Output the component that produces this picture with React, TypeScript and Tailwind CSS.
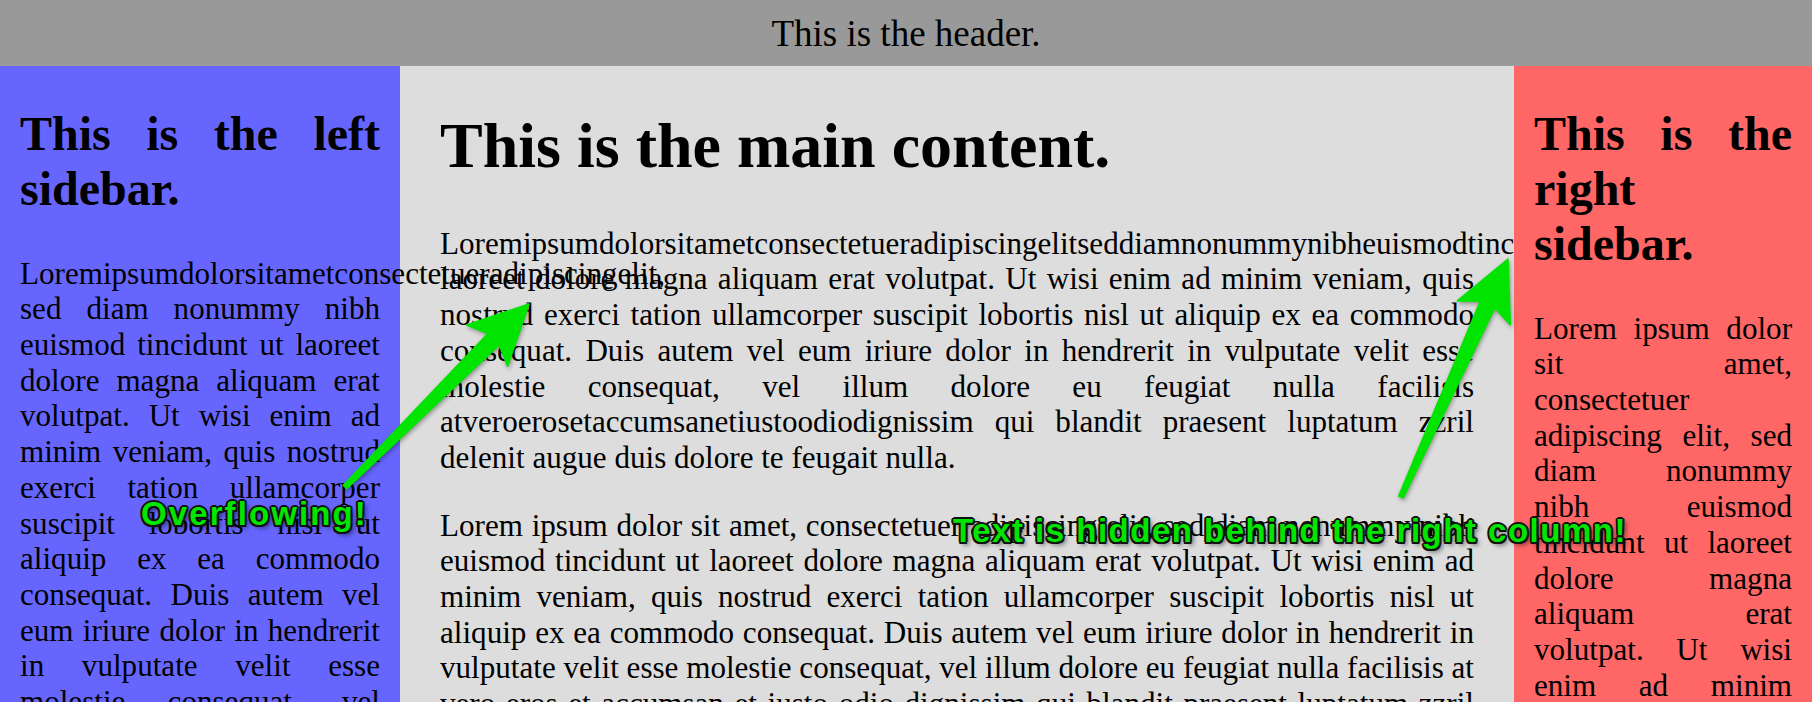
const leftText =
  "Loremipsumdolorsitametconsectetueradipiscingelit, sed diam nonummy nibh euismod tincidunt ut laoreet dolore magna aliquam erat volutpat. Ut wisi enim ad minim veniam, quis nostrud exerci tation ullamcorper suscipit lobortis nisl ut aliquip ex ea commodo consequat. Duis autem vel eum iriure dolor in hendrerit in vulputate velit esse molestie consequat, vel illum dolore eu feugiat nulla facilisis at vero eros et accumsan et iusto odio dignissim qui blandit praesent luptatum zzril delenit augue duis dolore te feugait nulla.";

const mainFirst =
  "Loremipsumdolorsitametconsectetueradipiscingelitseddiamnonummynibheuismodtinciduntut laoreet dolore magna aliquam erat volutpat. Ut wisi enim ad minim veniam, quis nostrud exerci tation ullamcorper suscipit lobortis nisl ut aliquip ex ea commodo consequat. Duis autem vel eum iriure dolor in hendrerit in vulputate velit esse molestie consequat, vel illum dolore eu feugiat nulla facilisis atveroerosetaccumsanetiustoodiodignissim qui blandit praesent luptatum zzril delenit augue duis dolore te feugait nulla.";

const lorem =
  "Lorem ipsum dolor sit amet, consectetuer adipiscing elit, sed diam nonummy nibh euismod tincidunt ut laoreet dolore magna aliquam erat volutpat. Ut wisi enim ad minim veniam, quis nostrud exerci tation ullamcorper suscipit lobortis nisl ut aliquip ex ea commodo consequat. Duis autem vel eum iriure dolor in hendrerit in vulputate velit esse molestie consequat, vel illum dolore eu feugiat nulla facilisis at vero eros et accumsan et iusto odio dignissim qui blandit praesent luptatum zzril delenit augue duis dolore te feugait nulla.";

// tapered skitch-style arrow, tail -> tip
function arrowPath(tx: number, ty: number, hx: number, hy: number) {
  const dx = hx - tx;
  const dy = hy - ty;
  const len = Math.hypot(dx, dy);
  const ux = dx / len;
  const uy = dy / len;
  const nx = -uy;
  const ny = ux;
  const p = (back: number, off: number) =>
    `${(hx - ux * back + nx * off).toFixed(1)},${(hy - uy * back + ny * off).toFixed(1)}`;
  return `M${p(0, 0)} L${p(59, 29)} L${p(50, 8)} L${p(len, 2.5)} L${p(len, -2.5)} L${p(50, -8)} L${p(59, -29)} Z`;
}

const calloutStyles =
  "absolute z-30 whitespace-nowrap font-['Liberation_Sans',Arial,sans-serif] text-[33px] font-bold leading-none text-[#00e600] [text-shadow:2px_0_0_#111,-2px_0_0_#111,0_2px_0_#111,0_-2px_0_#111,1.5px_1.5px_0_#111,-1.5px_1.5px_0_#111,1.5px_-1.5px_0_#111,-1.5px_-1.5px_0_#111,3px_3px_5px_rgba(0,0,0,0.6)]";

const bodyText = "my-8 text-[31.1px] leading-[35.7px]";

export default function App() {
  return (
    <div className="relative h-screen overflow-hidden font-['Liberation_Serif','Times_New_Roman',serif] leading-[normal] text-black">
      <header className="flex h-[66px] items-center justify-center bg-[#999] text-[37px]">
        This is the header.
      </header>
      <div className="flex">
        <aside className="relative z-10 w-[400px] shrink-0 bg-[#66f] px-5 text-justify">
          <h2 className="my-[0.83em] text-[48px] leading-[normal] font-bold">
            This is the left sidebar.
          </h2>
          <p className={bodyText}>{leftText}</p>
        </aside>
        <main className="min-w-0 flex-1 bg-[#ddd] px-10 text-justify">
          <h1 className="my-[0.67em] text-[64px] leading-[normal] font-bold">
            This is the main content.
          </h1>
          <p className={bodyText}>{mainFirst}</p>
          <p className={bodyText}>{lorem}</p>
        </main>
        <aside className="w-[298px] shrink-0 bg-[#f66] px-5 text-justify">
          <h2 className="my-[0.83em] text-[48px] leading-[normal] font-bold">
            This is the right sidebar.
          </h2>
          <p className={bodyText}>{lorem}</p>
        </aside>
      </div>

      <svg
        className="pointer-events-none absolute inset-0 z-20 h-full w-full [filter:drop-shadow(1px_2px_2px_rgba(0,0,0,0.35))]"
        viewBox="0 0 1812 702"
      >
        <path
          d={arrowPath(345, 487, 529, 304)}
          fill="#00e400"
          stroke="#00e400"
          strokeWidth={1.5}
          strokeLinejoin="round"
        />
        <path
          d={arrowPath(1401, 497, 1508, 259)}
          fill="#00e400"
          stroke="#00e400"
          strokeWidth={1.5}
          strokeLinejoin="round"
        />
      </svg>

      <span className={`${calloutStyles} left-[141px] top-[497px] tracking-[2.1px]`}>
        Overflowing!
      </span>
      <span className={`${calloutStyles} left-[953px] top-[514px] tracking-[1.5px]`}>
        Text is hidden behind the right column!
      </span>
    </div>
  );
}
